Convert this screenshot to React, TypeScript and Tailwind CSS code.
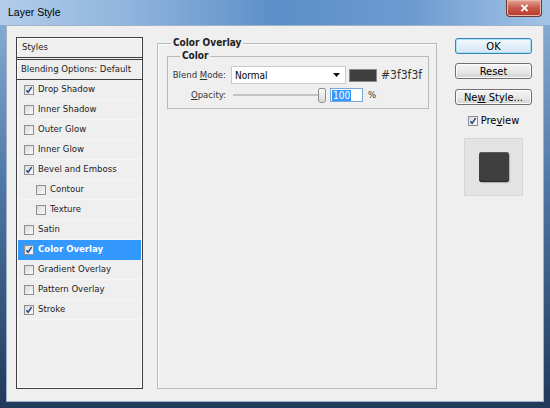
import { useState } from "react";

const ui = "font-['DejaVu_Sans_Condensed','DejaVu_Sans',sans-serif]";

type StyleItem = {
  label: string;
  checked?: boolean;
  indent?: boolean;
};

const items: StyleItem[] = [
  { label: "Drop Shadow", checked: true },
  { label: "Inner Shadow" },
  { label: "Outer Glow" },
  { label: "Inner Glow" },
  { label: "Bevel and Emboss", checked: true },
  { label: "Contour", indent: true },
  { label: "Texture", indent: true },
  { label: "Satin" },
  { label: "Color Overlay", checked: true },
  { label: "Gradient Overlay" },
  { label: "Pattern Overlay" },
  { label: "Stroke", checked: true },
];

function Check({ on }: { on?: boolean }) {
  return (
    <span className="inline-flex size-[10px] shrink-0 items-center justify-center border border-[#8f8f8f] bg-linear-to-br from-[#d9d9d9] to-[#fbfbfb]">
      {on && (
        <svg viewBox="0 0 8 8" className="size-[8px]">
          <path d="M1.4 4.3 L3.1 6.3 L6.6 1.2" stroke="#23408e" strokeWidth="1.5" fill="none" />
        </svg>
      )}
    </span>
  );
}

function Button({ children, primary }: { children: React.ReactNode; primary?: boolean }) {
  return (
    <button
      className={
        "flex h-[16px] w-[77px] items-center justify-center rounded-[3px] border text-[11px] leading-none text-black " +
        (primary
          ? "border-[#3c7fb1] bg-linear-to-b from-[#f3f9fd] to-[#d4e6f3] shadow-[inset_0_0_0_1px_#a9e2fb]"
          : "border-[#707070] bg-linear-to-b from-[#f4f4f4] via-[#e9e9e9] to-[#d2d2d2] shadow-[inset_0_0_0_1px_#fcfcfc]")
      }
    >
      {children}
    </button>
  );
}

export default function App() {
  const [selected, setSelected] = useState("Color Overlay");

  return (
    <div
      className={`flex h-[408px] w-[550px] flex-col bg-[linear-gradient(180deg,#8db2d9,#4f77a6_45%,#21395a)] ${ui}`}
    >
      {/* title bar */}
      <div className="flex h-[25px] shrink-0 items-start justify-between bg-[linear-gradient(90deg,#b3cdea,#8cb2dc_25%,#5b8fc7_50%,#6c9bd0_75%,#a4c4e6)] pl-[8px] pr-[8px]">
        <span className="flex h-[25px] items-center font-['Liberation_Sans',sans-serif] text-[10.5px] text-black">
          Layer Style
        </span>
        <button className="flex h-[17px] w-[36px] items-center justify-center rounded-b-[4px] border border-t-0 border-[#6a3b36] bg-linear-to-b from-[#e0a594] via-[#c8594a] to-[#b8382c] shadow-[inset_0_0_0_1px_#ecb8ab]">
          <svg viewBox="0 0 10 9" className="h-[8px] w-[9px]">
            <path d="M1.5 1 L8.5 8 M8.5 1 L1.5 8" stroke="#fff" strokeWidth="2" />
          </svg>
        </button>
      </div>

      {/* content */}
      <div className="mx-[6px] mb-[6px] flex flex-1 items-start border border-[#9eb2c9] bg-[#efefef] pl-[9px] pt-[11px]">
        {/* styles list */}
        <div className="flex h-[352px] w-[127px] shrink-0 flex-col border border-[#3f3f3f] shadow-[inset_0_0_0_1px_#fdfdfd]">
          <div className="flex h-[20px] items-center border-b border-[#3f3f3f] pl-[5px] text-[9.5px] text-[#222]">
            Styles
          </div>
          <div className="mt-[1px] flex h-[21px] items-center border-y border-[#3f3f3f] pl-[4px] text-[9.5px] text-[#222]">
            Blending Options: Default
          </div>
          {items.map((item) => {
            const active = item.label === selected;
            return (
              <div
                key={item.label}
                onClick={() => setSelected(item.label)}
                className={
                  "mx-px flex h-[20px] shrink-0 items-center gap-[4px] border-b border-dotted text-[9.5px] " +
                  (item.indent ? "pl-[18px] " : "pl-[6px] ") +
                  (active
                    ? "border-[#3399ff] bg-[#3399ff] font-bold text-white"
                    : "border-[#fcfcfc] text-[#222]")
                }
              >
                <Check on={item.checked} />
                <span>{item.label}</span>
              </div>
            );
          })}
        </div>

        {/* main group */}
        <fieldset className="ml-[14px] h-[352px] w-[280px] shrink-0 border border-[#b9b9b9] shadow-[inset_1px_1px_0_#fbfbfb]">
          <legend className="ml-[13px] bg-[#efefef] px-[2px] text-[10px] font-bold leading-[12px] text-[#222]">
            Color Overlay
          </legend>
          <fieldset className="ml-[9px] mt-px h-[59px] w-[262px] border border-[#b9b9b9]">
            <legend className="ml-[12px] px-[2px] text-[10px] font-bold leading-[12px] text-[#222]">
              Color
            </legend>

            <div className="mt-[4px] flex h-[18px] items-center">
              <span className="w-[58px] text-right text-[9.5px] text-[#333]">
                Blend <span className="underline">M</span>ode:
              </span>
              <div className="ml-[5px] flex h-[18px] w-[115px] items-center justify-between border border-[#c9c9c9] bg-white pl-[3px] pr-[5px] text-[10px] text-black">
                <span>Normal</span>
                <svg viewBox="0 0 7 4" className="h-[4px] w-[7px]">
                  <path d="M0 0 H7 L3.5 4 Z" fill="#111" />
                </svg>
              </div>
              <span className="ml-[3px] h-[13px] w-[28px] border border-[#8a8a8a] bg-[#3f3f3f]" />
              <span className="ml-[4px] text-[12px] text-[#333]">#3f3f3f</span>
            </div>

            <div className="mt-[4px] flex h-[14px] items-center">
              <span className="w-[58px] text-right text-[9.5px] text-[#333]">
                <span className="underline">O</span>pacity:
              </span>
              <div className="relative ml-[7px] h-[14px] w-[93px]">
                <div className="absolute left-0 right-[4px] top-[6px] h-[2px] border-y border-[#c4c4c4] bg-[#e2e2e2]" />
                <div className="absolute right-0 top-0 h-[15px] w-[8px] rounded-b-[3px] rounded-t-[2px] border border-[#8e8e8e] bg-linear-to-b from-[#fbfbfb] to-[#d9d9d9]" />
              </div>
              <div className="ml-[4px] flex h-[14px] w-[33px] items-center border border-[#7ea6d8] bg-white pl-[1px]">
                <span className="bg-[#3399ff] px-px text-[10px] leading-[11px] text-white">100</span>
              </div>
              <span className="ml-[5px] text-[9.5px] text-[#333]">%</span>
            </div>
          </fieldset>
        </fieldset>

        {/* buttons */}
        <div className="ml-[18px] flex w-[77px] shrink-0 flex-col items-center pt-px">
          <Button primary>OK</Button>
          <div className="mt-[9px]">
            <Button>Reset</Button>
          </div>
          <div className="mt-[10px]">
            <Button>
              <span>
                Ne<span className="underline">w</span> Style...
              </span>
            </Button>
          </div>
          <div className="mt-[8px] flex items-center gap-[3px] text-[11px] text-black">
            <Check on />
            <span>
              Pre<span className="underline">v</span>iew
            </span>
          </div>
          <div className="mt-[8px] flex h-[58px] w-[59px] items-center justify-center border border-[#d6d6d6] bg-[#e3e3e3]">
            <div className="size-[30px] rounded-[3px] bg-[#3f3f3f] shadow-[inset_0_1px_0_#5a5a5a,inset_0_-1px_0_#262626,1px_1px_1px_#b0b0b0]" />
          </div>
        </div>
      </div>
    </div>
  );
}
